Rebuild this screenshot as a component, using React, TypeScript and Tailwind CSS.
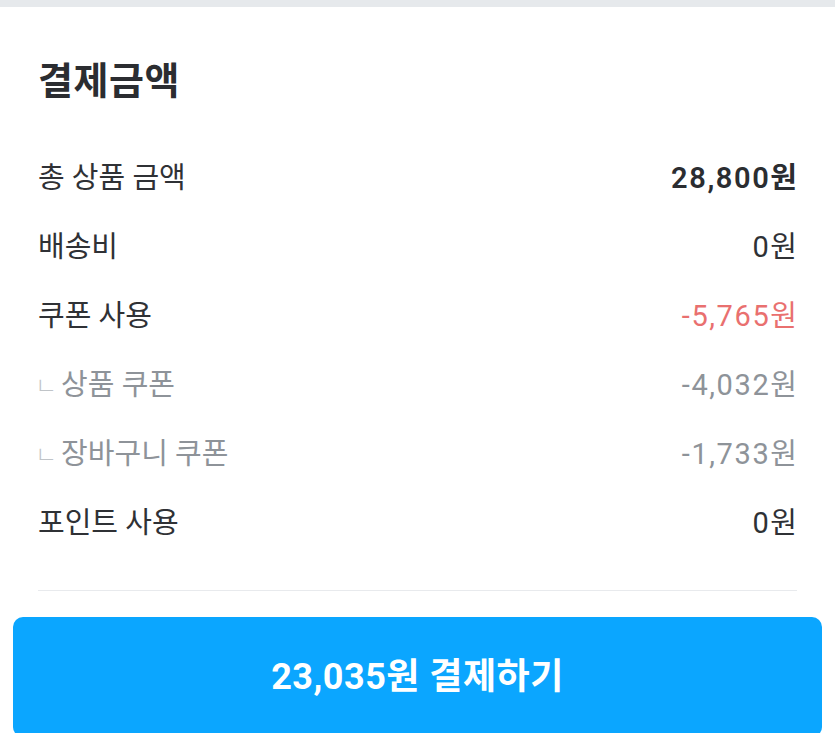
import React from 'react';

interface Row {
  label: string;
  value: string;
  kind?: 'bold' | 'red' | 'sub';
}

const rows: Row[] = [
  { label: '총 상품 금액', value: '28,800원', kind: 'bold' },
  { label: '배송비', value: '0원' },
  { label: '쿠폰 사용', value: '-5,765원', kind: 'red' },
  { label: '상품 쿠폰', value: '-4,032원', kind: 'sub' },
  { label: '장바구니 쿠폰', value: '-1,733원', kind: 'sub' },
  { label: '포인트 사용', value: '0원' },
];

const App: React.FC = () => {
  return (
    <div
      className="w-[835px] h-[733px] overflow-hidden bg-white"
      style={{ fontFamily: 'Roboto, "Noto Sans CJK KR", "Noto Sans", sans-serif' }}
    >
      {/* 상단 구분 영역 */}
      <div className="h-[7px] bg-[#e6e9ec]" />

      <div className="px-[38px] pt-[52px]">
        <h2 className="text-[38px] leading-[44px] font-bold text-[#2b2d31] tracking-[0.5px]">결제금액</h2>

        <div className="mt-[41px]">
          {rows.map((row) => (
            <div key={row.label} className="h-[69px] flex items-center justify-between text-[29px]">
              <span
                className={
                  row.kind === 'sub'
                    ? 'flex items-center text-[#8e9399]'
                    : 'text-[#2f3135]'
                }
              >
                {row.kind === 'sub' && (
                  <span className="text-[24px] font-light text-[#c0c4c8] -ml-[3px] mr-[4px]">ㄴ</span>
                )}
                {row.label}
              </span>
              <span
                className={
                  'tracking-[1.6px] -mr-[1.6px] ' +
                  (row.kind === 'bold'
                    ? 'font-semibold text-[#2b2d31]'
                    : row.kind === 'red'
                    ? 'text-[#e9706f]'
                    : row.kind === 'sub'
                    ? 'text-[#8e9399]'
                    : 'text-[#2f3135]')
                }
              >
                {row.value}
              </span>
            </div>
          ))}
        </div>

        <div className="mt-[32px] h-px bg-[#e8eaed]" />
      </div>

      <div className="px-[13px] mt-[26px]">
        <button className="w-full h-[120px] rounded-[10px] bg-[#0ba6ff] text-white text-[36px] font-bold tracking-[0.5px]">
          23,035원 결제하기
        </button>
      </div>
    </div>
  );
};

export default App;
